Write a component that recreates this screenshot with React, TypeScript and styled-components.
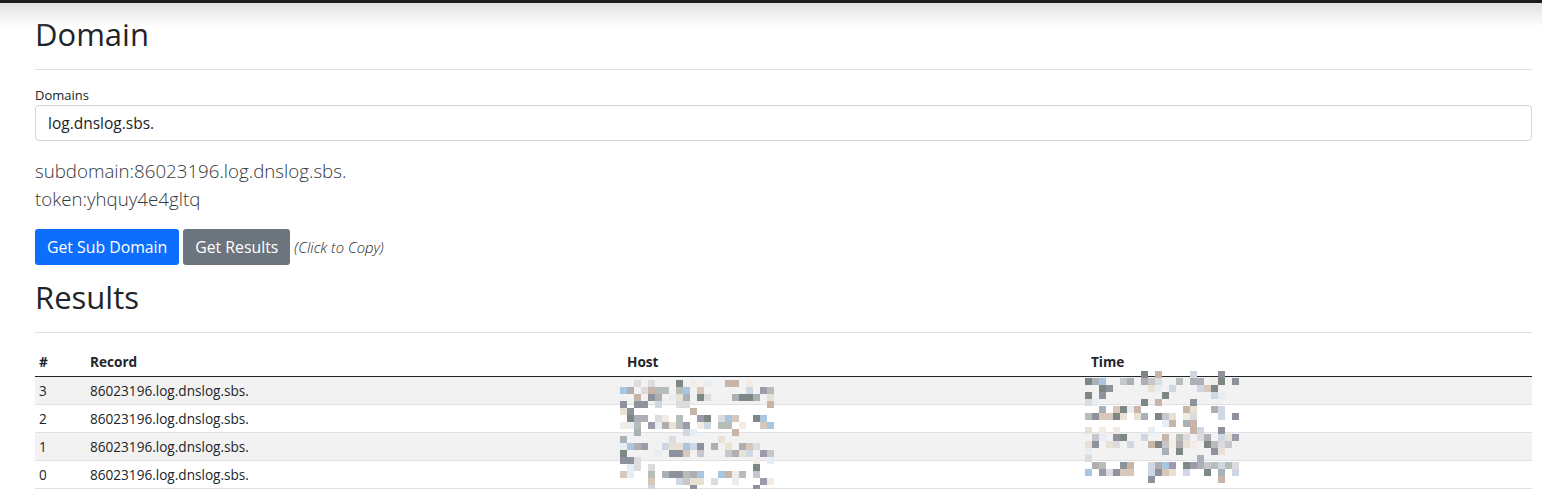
import styled, { createGlobalStyle } from 'styled-components'

const GlobalStyle = createGlobalStyle`
  body {
    margin: 0;
    background: #fff;
    color: #212529;
    font-family: "Open Sans", "Noto Sans", sans-serif;
  }
`

const NavBar = styled.div`
  position: relative;
  z-index: 2;
  height: 3px;
  background: #1b1d20;
  &::after {
    content: '';
    position: absolute;
    left: 0;
    right: 0;
    top: 3px;
    height: 24px;
    background: linear-gradient(#e2e2e2, rgba(255, 255, 255, 0));
  }
`

const Main = styled.main`
  padding: 13px 10px 0 35px;
`

const Heading = styled.h2`
  margin: 0 0 8px;
  font-size: 31px;
  font-weight: 400;
  line-height: 1.2;
`

const Rule = styled.hr`
  margin: 16px 0;
  border: 0;
  border-top: 1px solid #dfdfe2;
`

const Label = styled.label`
  display: block;
  font-size: 13px;
  margin-bottom: 1px;
`

const Input = styled.input`
  display: block;
  box-sizing: border-box;
  width: 100%;
  height: 36px;
  padding: 0 12px;
  font-family: inherit;
  font-size: 15.5px;
  color: #212529;
  border: 1px solid #d2d4d8;
  border-radius: 4px;
  outline: none;
`

const Lead = styled.p`
  margin: 0;
  font-size: 18.7px;
  font-weight: 300;
  line-height: 28px;
  color: #35383b;
`

const InfoBlock = styled.div`
  margin-top: 16px;
`

const Actions = styled.div`
  display: flex;
  align-items: center;
  gap: 4px;
  margin-top: 16px;
`

const Button = styled.button<{ $variant: 'primary' | 'secondary' }>`
  height: 36px;
  padding: 0 12px;
  border: none;
  border-radius: 3px;
  font-family: inherit;
  font-size: 15.8px;
  color: #fff;
  background: ${p => (p.$variant === 'primary' ? '#0d6efd' : '#6c757d')};
`

const Hint = styled.em`
  font-size: 14.8px;
  font-weight: 300;
  color: #212529;
`

const ResultsHeading = styled(Heading)`
  margin-top: 14px;
`

const TableWrap = styled.div`
  position: relative;
  margin-top: 16px;
`

const Table = styled.table`
  width: 100%;
  border-collapse: collapse;
  font-size: 13.6px;
  table-layout: fixed;
`

const Th = styled.th<{ $w?: number }>`
  text-align: left;
  font-weight: 700;
  padding: 3px 4px 5px;
  border-bottom: 1px solid #212529;
  width: ${p => (p.$w ? `${p.$w}px` : 'auto')};
`

const Row = styled.tr<{ $striped: boolean }>`
  background: ${p => (p.$striped ? '#f2f2f2' : '#fff')};
`

const Td = styled.td`
  height: 27px;
  padding: 0 4px;
  border-bottom: 1px solid #dfe1e4;
  vertical-align: middle;
`

const Mosaic = styled.svg`
  position: absolute;
  pointer-events: none;
`

const palette = [
  '#b0aeb0', '#c6c6cc', '#a8c6e0', '#d8c8bc', '#9d9aac', '#b7bdb8',
  '#e8e2d4', '#cfd8e2', '#8e929c', '#dcdcde', '#f2ece4', '#a9b0b6',
  '#e6eef4', '#c9b4a8', '#7d8884',
]

function mosaicRects(seed: number, cols: number, rows: number) {
  let s = seed
  const rnd = () => {
    s = (s * 9301 + 49297) % 233280
    return s / 233280
  }
  const out: { x: number; y: number; c: string }[] = []
  for (let r = 0; r < rows; r++) {
    const inText = r % 4 === 1 || r % 4 === 2
    for (let c = 0; c < cols; c++) {
      const v = rnd()
      const chance = inText ? 0.6 : 0.2
      if (v < chance) {
        const pool = inText ? palette : palette.slice(6)
        out.push({ x: c * 7, y: r * 7, c: pool[Math.floor(rnd() * pool.length)] })
      }
    }
  }
  return out
}

const MosaicBlock = ({ left, top, seed }: { left: number; top: number; seed: number }) => {
  const cols = 22
  const rows = 16
  const rects = mosaicRects(seed, cols, rows)
  return (
    <Mosaic
      width={cols * 7}
      height={rows * 7}
      style={{ left, top }}
      viewBox={`0 0 ${cols * 7} ${rows * 7}`}
    >
      {rects.map((r, i) => (
        <rect key={i} x={r.x} y={r.y} width={7} height={7} fill={r.c} />
      ))}
    </Mosaic>
  )
}

const records = [3, 2, 1, 0]

const App = () => {
  return (
    <>
      <GlobalStyle />
      <NavBar />
      <Main>
        <Heading>Domain</Heading>
        <Rule />
        <Label>Domains</Label>
        <Input defaultValue="log.dnslog.sbs." />
        <InfoBlock>
          <Lead>subdomain:86023196.log.dnslog.sbs.</Lead>
          <Lead>token:yhquy4e4gltq</Lead>
        </InfoBlock>
        <Actions>
          <Button $variant="primary">Get Sub Domain</Button>
          <Button $variant="secondary">Get Results</Button>
          <Hint>(Click to Copy)</Hint>
        </Actions>
        <ResultsHeading>Results</ResultsHeading>
        <Rule />
        <TableWrap>
          <Table>
            <thead>
              <tr>
                <Th $w={43}>#</Th>
                <Th $w={529}>Record</Th>
                <Th $w={456}>Host</Th>
                <Th>Time</Th>
              </tr>
            </thead>
            <tbody>
              {records.map((n, i) => (
                <Row key={n} $striped={i % 2 === 0}>
                  <Td>{n}</Td>
                  <Td>86023196.log.dnslog.sbs.</Td>
                  <Td></Td>
                  <Td></Td>
                </Row>
              ))}
            </tbody>
          </Table>
          <MosaicBlock left={585} top={31} seed={17} />
          <MosaicBlock left={1050} top={22} seed={91} />
        </TableWrap>
      </Main>
    </>
  )
}

export default App
